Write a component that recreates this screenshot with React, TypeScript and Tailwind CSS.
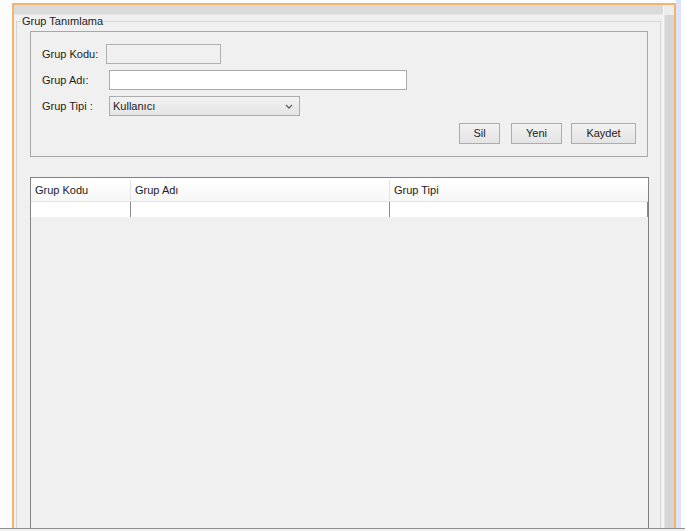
import React from 'react';

const Button: React.FC<{ label: string; className?: string }> = ({ label, className }) => (
  <button
    className={`h-[21px] border border-[#acacac] bg-gradient-to-b from-[#f2f2f2] to-[#e3e3e3] text-[11px] text-[#222] flex items-center justify-center ${className ?? ''}`}
  >
    {label}
  </button>
);

const App: React.FC = () => {
  return (
    <div className="w-[685px] h-[531px] flex flex-col bg-[#fbfbfb] font-['Liberation_Sans',Arial,sans-serif] text-[11px] text-[#222] overflow-hidden">
      <div className="flex-1 flex min-h-0">
        {/* left gutter */}
        <div className="w-[12px] bg-[#fcfcfc]" />

        {/* internal frame */}
        <div className="flex-1 flex flex-col mt-[3px] border-t-2 border-l-2 border-r-2 border-[#f2b56e] min-w-0">
          <div className="flex flex-1 min-h-0">
            {/* main area */}
            <div className="flex-1 flex flex-col bg-[#f0f0f0] min-w-0">
              <div className="h-[10px] bg-[#dadada] border-b border-[#e6e6e6]" />

              {/* titled border */}
              <div className="relative flex-1 flex flex-col mt-[6px] ml-[2px] mr-[2px] border-t border-l border-r border-[#d5d5d5] pl-[13px] pr-[11px] pt-[9px]">
                <span className="absolute -top-[7px] left-[4px] px-[1px] bg-[#f0f0f0] leading-[13px]">Grup Tanımlama</span>

                {/* form group */}
                <div className="h-[126px] mr-[1px] border border-[#a8a8a8] flex flex-col pl-[11px] pr-[11px] pt-[12px]">
                  <div className="flex items-center h-[20px]">
                    <span className="w-[64px]">Grup Kodu:</span>
                    <div className="w-[115px] h-[20px] border border-[#b0b0b0] bg-[#f0f0f0]" />
                  </div>
                  <div className="flex items-center h-[20px] mt-[6px]">
                    <span className="w-[67px]">Grup Adı:</span>
                    <div className="w-[298px] h-[20px] border border-[#acacac] bg-white" />
                  </div>
                  <div className="flex items-center h-[20px] mt-[6px]">
                    <span className="w-[67px]">Grup Tipi :</span>
                    <div className="w-[191px] h-[20px] border border-[#acacac] bg-gradient-to-b from-[#f3f3f3] to-[#e4e4e4] flex items-center pl-[3px] pr-[6px]">
                      <span className="flex-1">Kullanıcı</span>
                      <svg width="8" height="5" viewBox="0 0 8 5" className="mt-[1px]">
                        <path d="M1 1 L4 4 L7 1" fill="none" stroke="#666" strokeWidth="1.4" />
                      </svg>
                    </div>
                  </div>
                  <div className="flex justify-end mt-[7px]">
                    <Button label="Sil" className="w-[41px]" />
                    <Button label="Yeni" className="w-[51px] ml-[11px]" />
                    <Button label="Kaydet" className="w-[65px] ml-[9px]" />
                  </div>
                </div>

                {/* table */}
                <div className="flex-1 mt-[20px] border-t border-l border-r border-[#828282] flex flex-col bg-[#f0f0f0]">
                  <div className="flex h-[24px] pt-[2px] bg-gradient-to-b from-white to-[#f7f7f7] border-b border-[#e3e3e3]">
                    <div className="w-[100px] border-r border-[#e3e3e3] flex items-center pl-[4px]">Grup Kodu</div>
                    <div className="w-[259px] border-r border-[#e3e3e3] flex items-center pl-[4px]">Grup Adı</div>
                    <div className="flex-1 flex items-center pl-[4px]">Grup Tipi</div>
                  </div>
                  <div className="flex h-[15px] bg-white">
                    <div className="w-[100px] border-r border-[#8a8a8a]" />
                    <div className="w-[259px] border-r border-[#8a8a8a]" />
                    <div className="flex-1 border-r border-[#8a8a8a]" />
                  </div>
                </div>
              </div>
            </div>

            {/* scrollbar */}
            <div className="w-[11px] flex flex-col border-l border-[#f7f7f7]">
              <div className="h-[10px] bg-[#ececec]" />
              <div className="flex-1 bg-[#d6d6d6] border-l border-[#e4e4e4]" />
            </div>
          </div>
        </div>

        {/* right edge */}
        <div className="w-[5px] bg-[#dde4f7]" />
        <div className="w-[4px] bg-[#fcfcfc]" />
      </div>
      <div className="h-px bg-[#8f8f8f]" />
      <div className="h-[2px] bg-[#f0f0f0]" />
    </div>
  );
};

export default App;
